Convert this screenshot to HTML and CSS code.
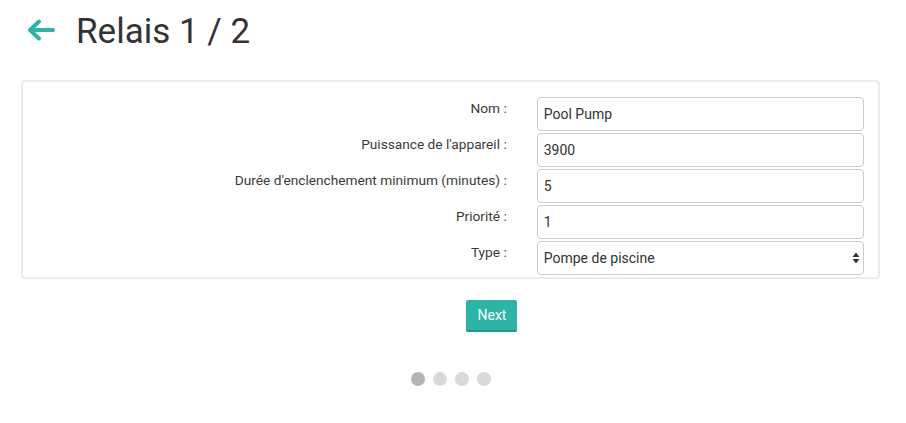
FILE: index.html
```html
<!DOCTYPE html>
<html>
<head>
<meta charset="utf-8">
<link rel="stylesheet" href="styles.css">
</head>
<body>
<div class="page">
  <div class="header">
    <svg class="back" width="30" height="24" viewBox="0 0 30 24">
      <path d="M27 12H5M13 3.5L4 12l9 8.5" fill="none" stroke="#2db3a7" stroke-width="4" stroke-linecap="round" stroke-linejoin="round"/>
    </svg>
    <h1 class="title">Relais 1 / 2</h1>
  </div>
  <div class="card">
    <form class="form">
      <label class="lbl">Nom :</label>
      <div class="field"><input class="inp" type="text" value="Pool Pump"></div>
      <label class="lbl">Puissance de l'appareil :</label>
      <div class="field"><input class="inp" type="text" value="3900"></div>
      <label class="lbl">Durée d'enclenchement minimum (minutes) :</label>
      <div class="field"><input class="inp" type="text" value="5"></div>
      <label class="lbl">Priorité :</label>
      <div class="field"><input class="inp" type="text" value="1"></div>
      <label class="lbl">Type :</label>
      <div class="field sel-wrap">
        <select class="inp sel"><option>Pompe de piscine</option></select>
        <svg class="caret" width="8" height="12" viewBox="0 0 8 12"><path d="M4 0.5L7.5 5H0.5z M4 11.5L7.5 7H0.5z" fill="#333"/></svg>
      </div>
    </form>
  </div>
  <div class="actions">
    <button class="btn hidden" type="button">Previous</button>
    <button class="btn" type="button">Next</button>
  </div>
  <div class="dots">
    <span class="dot active"></span><span class="dot"></span><span class="dot"></span><span class="dot"></span>
  </div>
</div>
</body>
</html>
```
FILE: styles.css
```css
html, body { margin: 0; padding: 0; background: #fff; }
body { font-family: Roboto, "Liberation Sans", sans-serif; color: #333; }
.page { padding: 0 26px 0 21px; }
.header { display: flex; align-items: center; height: 62px; }
.back { margin-left: 5px; margin-top: -2px; }
.title { margin: 0 0 0 20px; font-size: 35px; font-weight: 400; color: #333; line-height: 1; letter-spacing: 0; }
.card { margin-top: 18px; border: 2px solid #ececec; border-radius: 4px; padding: 15px 0 2px; }
.form { display: grid; grid-template-columns: 7fr 5fr; row-gap: 2px; }
.lbl { text-align: right; font-size: 13.7px; line-height: 18px; padding: 2px 15px 0; color: #3a3a3a; }
.field { padding: 0 14px 0 15px; position: relative; }
.inp { box-sizing: border-box; width: 100%; height: 34px; border: 1px solid #ccc; border-radius: 4px; padding: 0 6px; font-family: Roboto, "Liberation Sans", sans-serif; font-size: 14px; color: #333; background: #fff; outline: none; margin: 0; }
.sel { appearance: none; -webkit-appearance: none; }
.caret { position: absolute; right: 18px; top: 11px; }
.actions { display: flex; justify-content: center; gap: 4px; margin-top: 21px; padding-left: 3px; }
.btn { height: 32px; padding: 0 11px; border: none; border-bottom: 2px solid #23968b; border-radius: 2px; background: #2db3a7; color: #fff; font-family: Roboto, "Liberation Sans", sans-serif; font-size: 14px; }
.btn.hidden { visibility: hidden; }
.dots { display: flex; justify-content: center; gap: 8px; margin-top: 40px; }
.dot { width: 14px; height: 14px; border-radius: 50%; background: #d9d9d9; }
.dot.active { background: #b3b3b3; }
```
